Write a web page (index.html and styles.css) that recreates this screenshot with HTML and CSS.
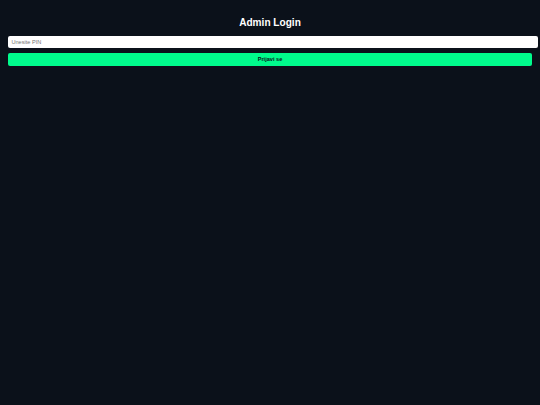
FILE: index.html
```html
<!DOCTYPE html>
<html lang="hr">
<head>
<meta charset="utf-8">
<title>Admin Login</title>
<link rel="stylesheet" href="styles.css">
</head>
<body>
<main class="login">
  <h2 class="title">Admin Login</h2>
  <input class="pin" type="password" placeholder="Unesite PIN">
  <button class="submit" type="button">Prijavi se</button>
</main>
</body>
</html>
```
FILE: styles.css
```css
html, body {
  margin: 0;
  background: #0b111a;
  height: 100%;
}
body {
  font-family: "Liberation Sans", Arial, sans-serif;
}
.login {
  padding: 8.4px;
  display: flex;
  flex-direction: column;
  align-items: stretch;
}
.title {
  margin: 8.4px 0 7.6px;
  text-align: center;
  color: #ffffff;
  font-size: 10.1px;
  line-height: 11.6px;
  font-weight: bold;
}
.pin {
  box-sizing: content-box;
  width: 100%;
  height: 8px;
  margin: 0;
  padding: 2px 3px;
  border: 0;
  border-radius: 2px;
  background: #ffffff;
  color: #111;
  font-family: "Liberation Sans", Arial, sans-serif;
  font-size: 5.6px;
  outline: none;
}
.pin::placeholder {
  color: #757575;
}
.submit {
  box-sizing: border-box;
  width: 100%;
  height: 13px;
  margin: 4.6px 0 0;
  padding: 0;
  border: 0;
  border-radius: 2px;
  background: #00fb8c;
  color: #0b111a;
  font-family: "Liberation Sans", Arial, sans-serif;
  font-size: 5.6px;
  font-weight: bold;
}
```
